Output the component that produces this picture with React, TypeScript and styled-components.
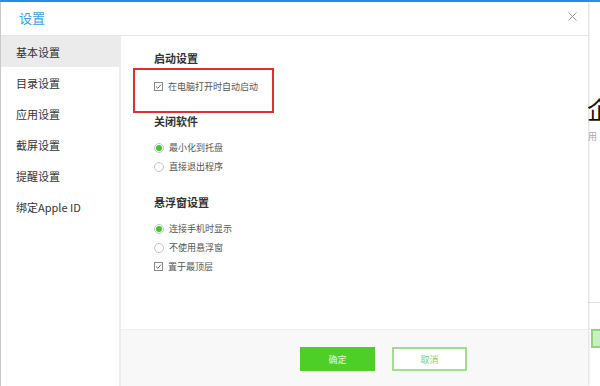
import React from "react";
import styled, { createGlobalStyle } from "styled-components";

const Global = createGlobalStyle`
  html, body { margin: 0; padding: 0; background: #ffffff; }
  body { width: 600px; height: 386px; overflow: hidden; font-family: "Noto Sans CJK SC", "Noto Sans", sans-serif; }
  * { box-sizing: border-box; }
`;

const Page = styled.div`
  width: 600px;
  height: 386px;
  display: flex;
  flex-direction: column;
  background: #fff;
`;

const TopLine = styled.div`
  height: 2px;
  background: #2a8fe8;
  flex: none;
`;

const Stage = styled.div`
  flex: 1;
  display: flex;
  min-height: 0;
`;

const Dialog = styled.div`
  width: 588px;
  flex: none;
  display: flex;
  flex-direction: column;
  border-left: 1px solid #c9c9c9;
  background: #fff;
  position: relative;
  z-index: 1;
  box-shadow: 1px 0 2px rgba(0, 0, 0, 0.15);
`;

const TitleBar = styled.div`
  height: 34px;
  flex: none;
  display: flex;
  align-items: center;
  justify-content: space-between;
  padding: 0 10px 0 18px;
  border-bottom: 1px solid #e6e6e6;
`;

const Title = styled.div`
  font-size: 13px;
  color: #37a2e4;
  line-height: 16px;
  margin-top: -2px;
`;

const Close = styled.div`
  width: 12px;
  height: 12px;
  display: flex;
  align-items: center;
  justify-content: center;
  margin-top: -4px;
`;

const Body = styled.div`
  flex: 1;
  display: flex;
  min-height: 0;
`;

const Sidebar = styled.div`
  width: 120px;
  flex: none;
  border-right: 2px solid #ececec;
  display: flex;
  flex-direction: column;
`;

const NavItem = styled.div<{ $active?: boolean }>`
  height: 31px;
  display: flex;
  align-items: center;
  padding-left: 15px;
  font-size: 11px;
  color: #333;
  background: ${(p) => (p.$active ? "#ebebeb" : "transparent")};
`;

const Main = styled.div`
  flex: 1;
  display: flex;
  flex-direction: column;
  min-width: 0;
`;

const Content = styled.div`
  flex: 1;
  padding: 14px 0 0 33px;
  display: flex;
  flex-direction: column;
  align-items: flex-start;
`;

const Heading = styled.div<{ $gap?: number }>`
  font-size: 11px;
  line-height: 16px;
  font-weight: 700;
  color: #333;
  margin-top: ${(p) => p.$gap ?? 0}px;
`;

const Highlight = styled.div`
  margin: 2px 0 0 -21px;
  width: 141px;
  height: 45px;
  border: 2px solid #e52d2d;
  padding: 9px 0 0 19px;
`;

const Options = styled.div`
  margin-top: 9px;
  display: flex;
  flex-direction: column;
`;

const Row = styled.div`
  height: 19px;
  display: flex;
  align-items: center;
  gap: 5px;
  font-size: 9px;
  color: #555;
`;

const HighlightRow = styled(Row)`
  height: 14px;
`;

const Radio = styled.span<{ $on?: boolean }>`
  width: 10px;
  height: 10px;
  border-radius: 50%;
  border: 1px solid #c4c4c4;
  display: inline-flex;
  align-items: center;
  justify-content: center;
  background: #fff;
  &::after {
    content: "";
    width: 6px;
    height: 6px;
    border-radius: 50%;
    background: ${(p) => (p.$on ? "#3ec72a" : "transparent")};
  }
`;

const Footer = styled.div`
  height: 57px;
  flex: none;
  background: #f8f8f8;
  border-top: 1px solid #f0f0f0;
  display: flex;
  align-items: flex-start;
  padding: 17px 0 0 179px;
  gap: 17px;
`;

const Button = styled.div<{ $primary?: boolean }>`
  width: 75px;
  height: 24px;
  display: flex;
  align-items: center;
  justify-content: center;
  font-size: 9px;
  background: ${(p) => (p.$primary ? "#4dcf27" : "#fff")};
  color: ${(p) => (p.$primary ? "#e6f8df" : "#7fd267")};
  border: ${(p) => (p.$primary ? "none" : "2px solid #9ddf8b")};
`;

const Backdrop = styled.div`
  flex: 1;
  overflow: hidden;
  display: flex;
  flex-direction: column;
  padding-top: 93px;
  background: #fff;
`;

const BigGlyph = styled.div`
  font-size: 24px;
  line-height: 28px;
  color: #111;
  margin-left: -1px;
  white-space: nowrap;
`;

const SmallGlyph = styled.div`
  font-size: 9px;
  line-height: 12px;
  color: #aaa;
  margin-top: 8px;
  margin-left: 0px;
`;

const BgRule = styled.div`
  height: 1px;
  background: #e2e2e2;
  margin-top: 159px;
`;

const BgBox = styled.div`
  width: 12px;
  height: 19px;
  margin: 26px 0 0 3px;
  border: 2px solid #8fd47c;
  background: #c9efbe;
`;

function CheckBox() {
  return (
    <svg width="9" height="9" viewBox="0 0 9 9">
      <rect x="0.5" y="0.5" width="8" height="8" fill="#fff" stroke="#8a8a8a" />
      <path d="M2 4.6 L3.8 6.3 L7 2.6" fill="none" stroke="#666" strokeWidth="1" />
    </svg>
  );
}

export default function App() {
  const nav = ["基本设置", "目录设置", "应用设置", "截屏设置", "提醒设置", "绑定Apple ID"];
  return (
    <>
      <Global />
      <Page>
        <TopLine />
        <Stage>
          <Dialog>
            <TitleBar>
              <Title>设置</Title>
              <Close>
                <svg width="9" height="9" viewBox="0 0 9 9">
                  <path d="M0.5 0.5 L8.5 8.5 M8.5 0.5 L0.5 8.5" stroke="#9a9a9a" strokeWidth="1" />
                </svg>
              </Close>
            </TitleBar>
            <Body>
              <Sidebar>
                {nav.map((n, i) => (
                  <NavItem key={n} $active={i === 0}>
                    {n}
                  </NavItem>
                ))}
              </Sidebar>
              <Main>
                <Content>
                  <Heading>启动设置</Heading>
                  <Highlight>
                    <HighlightRow>
                      <CheckBox />
                      在电脑打开时自动启动
                    </HighlightRow>
                  </Highlight>
                  <Heading>关闭软件</Heading>
                  <Options>
                    <Row>
                      <Radio $on />
                      最小化到托盘
                    </Row>
                    <Row>
                      <Radio />
                      直接退出程序
                    </Row>
                  </Options>
                  <Heading $gap={18}>悬浮窗设置</Heading>
                  <Options>
                    <Row>
                      <Radio $on />
                      连接手机时显示
                    </Row>
                    <Row>
                      <Radio />
                      不使用悬浮窗
                    </Row>
                    <Row>
                      <CheckBox />
                      置于最顶层
                    </Row>
                  </Options>
                </Content>
                <Footer>
                  <Button $primary>确定</Button>
                  <Button>取消</Button>
                </Footer>
              </Main>
            </Body>
          </Dialog>
          <Backdrop>
            <BigGlyph>企</BigGlyph>
            <SmallGlyph>用</SmallGlyph>
            <BgRule />
            <BgBox />
          </Backdrop>
        </Stage>
      </Page>
    </>
  );
}
